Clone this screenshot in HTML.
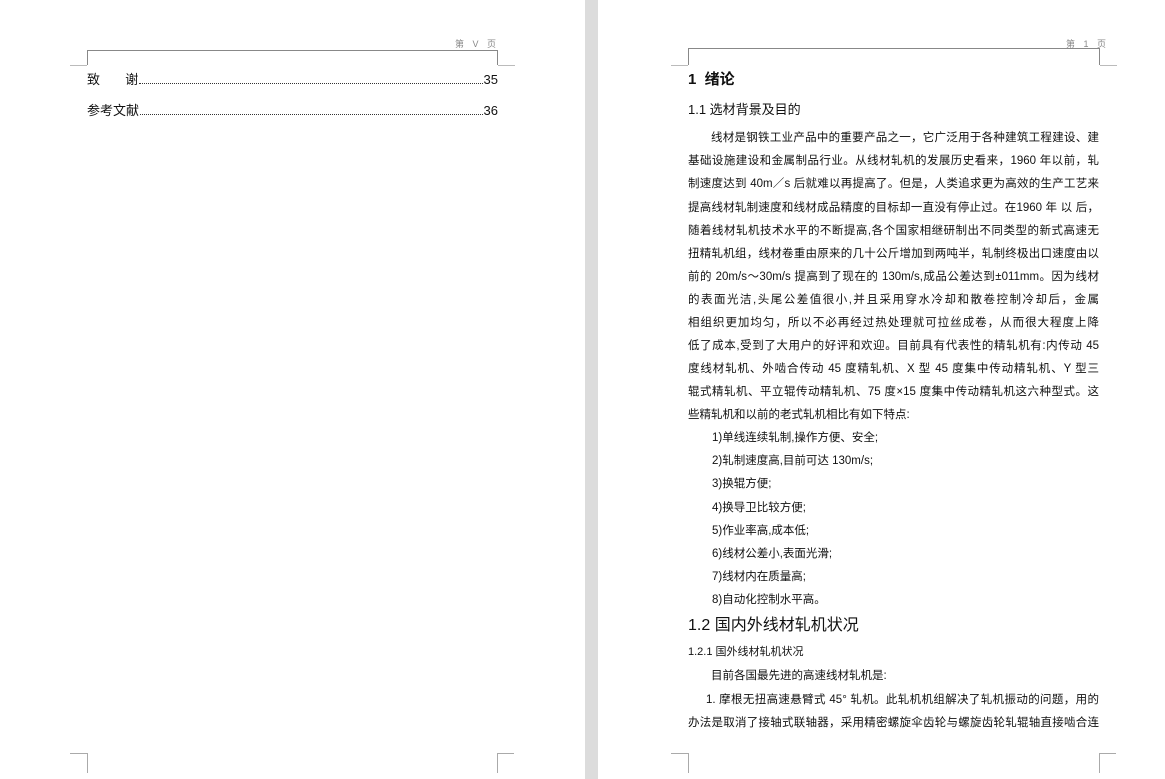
<!DOCTYPE html>
<html><head><meta charset="utf-8"><style>
body{margin:0;width:1165px;height:779px;position:relative;background:#fff;overflow:hidden;font-family:"Liberation Sans","Noto Sans CJK SC","WenQuanYi Zen Hei",sans-serif;color:#111}
.g{position:absolute;left:585px;top:0;width:13px;height:779px;background:#dcdcdc}
.h{position:absolute;background:#888}
.t{position:absolute;white-space:nowrap;line-height:1}
.j{position:absolute;left:688px;width:411px;font-size:11.5px;line-height:16px;height:16px;overflow:hidden;text-align:justify;text-align-last:justify;word-break:break-all}
.hd{position:absolute;font-size:9px;color:#888;letter-spacing:3px}
</style></head><body>
<div class="g"></div>
<div class="hd" style="left:455px;top:37px">第 V 页</div>
<div class="h" style="left:87px;top:50px;width:411px;height:1px"></div>
<div class="h" style="left:87px;top:50px;width:1px;height:15px"></div>
<div class="h" style="left:497px;top:50px;width:1px;height:15px"></div>
<div class="h" style="left:70px;top:65px;width:17px;height:1px;background:#bbb"></div>
<div class="h" style="left:498px;top:65px;width:17px;height:1px;background:#bbb"></div>
<div class="h" style="left:87px;top:753px;width:1px;height:20px;background:#aaa"></div>
<div class="h" style="left:70px;top:753px;width:17px;height:1px;background:#aaa"></div>
<div class="h" style="left:497px;top:753px;width:1px;height:20px;background:#aaa"></div>
<div class="h" style="left:497px;top:753px;width:17px;height:1px;background:#aaa"></div>
<div class="t" style="left:87px;top:73px;width:411px;font-size:13px;display:flex"><span>致&nbsp;&nbsp;&nbsp;&nbsp;&nbsp;&nbsp;&nbsp;谢</span><span style="flex:1;border-bottom:1px dotted #333;margin:0 1px 2px"></span><span>35</span></div>
<div class="t" style="left:87px;top:104px;width:411px;font-size:13px;display:flex"><span>参考文献</span><span style="flex:1;border-bottom:1px dotted #333;margin:0 1px 2px"></span><span>36</span></div>
<div class="hd" style="left:1066px;top:37px">第 1 页</div>
<div class="h" style="left:688px;top:48px;width:412px;height:1px"></div>
<div class="h" style="left:688px;top:48px;width:1px;height:17px"></div>
<div class="h" style="left:1099px;top:48px;width:1px;height:17px"></div>
<div class="h" style="left:671px;top:65px;width:17px;height:1px;background:#bbb"></div>
<div class="h" style="left:1100px;top:65px;width:17px;height:1px;background:#bbb"></div>
<div class="h" style="left:688px;top:753px;width:1px;height:20px;background:#aaa"></div>
<div class="h" style="left:671px;top:753px;width:17px;height:1px;background:#aaa"></div>
<div class="h" style="left:1099px;top:753px;width:1px;height:20px;background:#aaa"></div>
<div class="h" style="left:1099px;top:753px;width:17px;height:1px;background:#aaa"></div>
<div class="t" style="left:688px;top:72px;font-size:15px;font-weight:bold">1&nbsp; 绪论</div>
<div class="t" style="left:688px;top:103px;font-size:13px">1.1 选材背景及目的</div>
<div class="j" style="top:130px;left:711px;width:388px">线材是钢铁工业产品中的重要产品之一，它广泛用于各种建筑工程建设、建</div>
<div class="j" style="top:153px">基础设施建设和金属制品行业。从线材轧机的发展历史看来，1960 年以前，轧</div>
<div class="j" style="top:176px">制速度达到 40m／s 后就难以再提高了。但是，人类追求更为高效的生产工艺来</div>
<div class="j" style="top:200px">提高线材轧制速度和线材成品精度的目标却一直没有停止过。在1960 年 以 后，</div>
<div class="j" style="top:223px">随着线材轧机技术水平的不断提高,各个国家相继研制出不同类型的新式高速无</div>
<div class="j" style="top:246px">扭精轧机组，线材卷重由原来的几十公斤增加到两吨半，轧制终极出口速度由以</div>
<div class="j" style="top:269px">前的 20m/s～30m/s 提高到了现在的 130m/s,成品公差达到±011mm。因为线材</div>
<div class="j" style="top:292px">的表面光洁,头尾公差值很小,并且采用穿水冷却和散卷控制冷却后，金属</div>
<div class="j" style="top:315px">相组织更加均匀，所以不必再经过热处理就可拉丝成卷，从而很大程度上降</div>
<div class="j" style="top:338px">低了成本,受到了大用户的好评和欢迎。目前具有代表性的精轧机有:内传动 45</div>
<div class="j" style="top:361px">度线材轧机、外啮合传动 45 度精轧机、X 型 45 度集中传动精轧机、Y 型三</div>
<div class="j" style="top:384px">辊式精轧机、平立辊传动精轧机、75 度×15 度集中传动精轧机这六种型式。这</div>
<div class="j" style="top:407px;text-align-last:left">些精轧机和以前的老式轧机相比有如下特点:</div>
<div class="j" style="top:430px;left:712px;text-align-last:left">1)单线连续轧制,操作方便、安全;</div>
<div class="j" style="top:453px;left:712px;text-align-last:left">2)轧制速度高,目前可达 130m/s;</div>
<div class="j" style="top:476px;left:712px;text-align-last:left">3)换辊方便;</div>
<div class="j" style="top:500px;left:712px;text-align-last:left">4)换导卫比较方便;</div>
<div class="j" style="top:523px;left:712px;text-align-last:left">5)作业率高,成本低;</div>
<div class="j" style="top:546px;left:712px;text-align-last:left">6)线材公差小,表面光滑;</div>
<div class="j" style="top:569px;left:712px;text-align-last:left">7)线材内在质量高;</div>
<div class="j" style="top:592px;left:712px;text-align-last:left">8)自动化控制水平高。</div>
<div class="t" style="left:688px;top:618px;font-size:16px">1.2 国内外线材轧机状况</div>
<div class="t" style="left:688px;top:647px;font-size:11px">1.2.1 国外线材轧机状况</div>
<div class="j" style="top:668px;left:711px;text-align-last:left">目前各国最先进的高速线材轧机是:</div>
<div class="j" style="top:692px;left:706px;width:393px">1. 摩根无扭高速悬臂式 45° 轧机。此轧机机组解决了轧机振动的问题，用的</div>
<div class="j" style="top:715px">办法是取消了接轴式联轴器，采用精密螺旋伞齿轮与螺旋齿轮轧辊轴直接啮合连</div>
</body></html>
